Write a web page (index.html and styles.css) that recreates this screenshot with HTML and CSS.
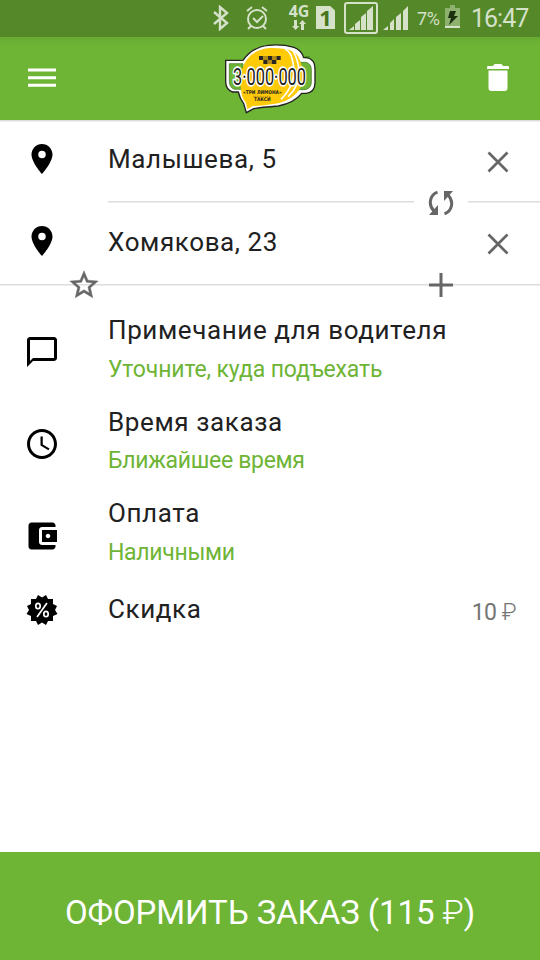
FILE: index.html
```html
<!DOCTYPE html>
<html lang="ru">
<head>
<meta charset="utf-8">
<title>Заказ такси</title>
<link rel="stylesheet" href="styles.css">
</head>
<body>
<div class="screen">
  <div class="status">
    <svg class="bt" width="18" height="26" viewBox="0 0 18 26"><path d="M2 7l13 11-7 6V2l7 6L2 19" fill="none" stroke="currentColor" stroke-width="2.4"/></svg>
    <svg class="alarm" width="24" height="26" viewBox="0 0 24 26"><g fill="none" stroke="currentColor" stroke-width="2"><circle cx="12" cy="14" r="9"/><path d="M8 13l4 4 6-6M2 6l5-4M22 6l-5-4M6 21l-3 3M18 21l3 3"/></g></svg>
    <div class="net"><span>4G</span><svg width="14" height="10" viewBox="0 0 14 10"><path d="M2 0h3v6h2.500L3.500 10 0 6h2zM9 10h3V4h2l-3.500-4L7 4h2z" fill="currentColor"/></svg></div>
    <div class="sim">1</div>
    <div class="sigbox"><svg width="26" height="26" viewBox="0 0 26 26"><path d="M1 25l5-4v4zM7 25v-6l5-4v10zM13 25V12l5-4v17zM19 25V6l6-5v24z" fill="currentColor"/></svg></div>
    <svg class="sig" width="26" height="26" viewBox="0 0 26 26"><path d="M0 25l5-4v4zM7 25v-7l4-4v11zM13 25V12l5-4v17zM20 25V6l5-5v24z" fill="currentColor"/></svg>
    <span class="pct">7%</span>
    <svg class="bat" width="15" height="24" viewBox="0 0 15 24"><path d="M0 3h5V0h5v3h5v18H0z" fill="#8eb16f"/><path d="M0 21h15v2H0z" fill="currentColor"/><path d="M5 6h6l-2 5h4L4 20l2-7H3z" fill="#1c3010"/></svg>
    <span class="time">16:47</span>
  </div>

  <header class="bar">
    <svg class="menu" width="28" height="20" viewBox="0 0 28 20"><path d="M0 2h28M0 9.7h28M0 17.3h28" stroke="#fff" stroke-width="3"/></svg>
    <svg class="logo" width="94" height="70" viewBox="21 18 282 210">
      <path d="M32 70H84Q112 30 160 25Q202 21 237 31Q259 39 266 62H276Q300 67 300 96V137Q300 165 273 169H260Q238 197 190 207Q135 211 116 215L94 227L86 200Q74 184 70 165H53Q33 159 32 135Z" fill="#fff" stroke="#222" stroke-width="4"/>
      <path d="M43 80H84V157H58Q43 152 43 133ZM252 76H273Q289 80 289 98V135Q289 154 271 158H247Z" fill="#6eb435" stroke="#397019" stroke-width="2"/>
      <path d="M95 68Q119 37 164 33Q207 32 228 41Q249 48 257 75Q274 123 253 158Q232 188 190 199Q143 207 114 207L97 217L93 197Q80 184 78 158Q72 99 95 68Z" fill="#ffca08"/>
      <path d="M210 36Q230 44 235 83Q245 140 198 187M235 43Q249 68 252 99Q252 151 219 179" fill="none" stroke="#fff" stroke-width="5"/>
      <path d="M132 57h13v12h-13zM158 57h13v12h-13zM184 57h13v12h-13zM145 69h13v12h-13zM171 69h13v12h-13z" fill="#292725"/>
      <path d="M145 57h13v12h-13zM171 57h13v12h-13zM158 69h13v12h-13z" fill="#af8b12"/>
      <text class="logo-num" x="54" y="143" textLength="219" lengthAdjust="spacingAndGlyphs">3·000·000</text>
      <text class="logo-sub" x="84" y="171" textLength="116" lengthAdjust="spacingAndGlyphs">«ТРИ ЛИМОНА»</text>
      <path d="M114 178h52" stroke="#a47f16" stroke-width="2" stroke-dasharray="4 2"/>
      <text class="logo-sub" x="117" y="192" textLength="50" lengthAdjust="spacingAndGlyphs">ТАКСИ</text>
      <text class="logo-tm" x="269" y="66">TM</text>
    </svg>
    <svg class="trash" width="22" height="28" viewBox="0 0 22 28"><path d="M1 2h5q1-2 2-2h6q1 0 2 2h5q1 0 1 1v2H0V3q0-1 1-1zM1.500 6.500h19V24q0 3-3 3h-13q-3 0-3-3z" fill="#fff"/></svg>
  </header>

  <main class="content">
    <section class="address">
      <svg class="pin" width="36" height="36" viewBox="0 0 24 24"><path d="M12 2C8.13 2 5 5.13 5 9c0 5.25 7 13 7 13s7-7.75 7-13c0-3.87-3.13-7-7-7zm0 9.5a2.5 2.5 0 0 1 0-5 2.5 2.5 0 0 1 0 5z"/></svg>
      <span class="title">Малышева, 5</span>
      <svg class="close" width="22" height="22" viewBox="0 0 22 22"><path d="M1.5 1.5l19 19M20.500 1.500l-19 19"/></svg>
      <div class="swap"><svg width="26" height="26" viewBox="0 0 26 26"><path d="M9.500 2.200C1.500 5 0 15 6 21M16.500 23.800C24.500 21 26 11 20 5" fill="none" stroke="#666" stroke-width="3"/><path d="M1 25h9v-10zM25 1h-9v10z" fill="#666"/></svg></div>
    </section>
    <section class="address second">
      <svg class="pin" width="36" height="36" viewBox="0 0 24 24"><path d="M12 2C8.130 2 5 5.130 5 9c0 5.250 7 13 7 13s7-7.750 7-13c0-3.870-3.130-7-7-7zm0 9.500a2.500 2.500 0 0 1 0-5 2.500 2.500 0 0 1 0 5z"/></svg>
      <span class="title">Хомякова, 23</span>
      <svg class="close" width="22" height="22" viewBox="0 0 22 22"><path d="M1.500 1.500l19 19M20.500 1.500l-19 19"/></svg>
      <svg class="star" width="34" height="34" viewBox="0 0 24 24"><path d="M22 9.240l-7.190-.62L12 2 9.190 8.630 2 9.240l5.460 4.730L5.820 21 12 17.270 18.180 21l-1.630-7.030L22 9.240zM12 15.400l-3.760 2.270 1-4.280-3.320-2.880 4.380-.38L12 6.100l1.710 4.040 4.380.38-3.320 2.880 1 4.280L12 15.400z" fill="#666"/></svg>
      <svg class="plus" width="24" height="24" viewBox="0 0 24 24"><path d="M12 0v24M0 12h24" stroke="#666" stroke-width="3"/></svg>
    </section>

    <section class="item">
      <svg class="icon" width="36" height="36" viewBox="0 0 24 24"><path d="M20 2H4c-1.100 0-2 .9-2 2v18l4-4h14c1.100 0 2-.9 2-2V4c0-1.100-.9-2-2-2zm0 14H6l-2 2V4h16v12z"/></svg>
      <div class="text"><span class="title">Примечание для водителя</span><span class="sub">Уточните, куда подъехать</span></div>
    </section>
    <section class="item">
      <svg class="icon" width="36" height="36" viewBox="0 0 24 24"><path d="M11.990 2C6.470 2 2 6.480 2 12s4.470 10 9.990 10C17.520 22 22 17.520 22 12S17.520 2 11.990 2zM12 20c-4.420 0-8-3.580-8-8s3.580-8 8-8 8 3.580 8 8-3.580 8-8 8zM12.500 7H11v6l5.250 3.150.75-1.230-4.500-2.670z"/></svg>
      <div class="text"><span class="title">Время заказа</span><span class="sub tight">Ближайшее время</span></div>
    </section>
    <section class="item">
      <svg class="icon wallet" width="36" height="36" viewBox="0 0 24 24"><path d="M21 18v1c0 1.100-.9 2-2 2H5c-1.110 0-2-.9-2-2V5c0-1.100.89-2 2-2h14c1.100 0 2 .9 2 2v1h-9c-1.110 0-2 .9-2 2v8c0 1.100.89 2 2 2h9zm-9-2h10V8H12v8zm4-2.500c-.83 0-1.500-.67-1.500-1.500s.67-1.500 1.500-1.500 1.500.67 1.500 1.500-.67 1.500-1.500 1.500z"/></svg>
      <div class="text"><span class="title">Оплата</span><span class="sub tight">Наличными</span></div>
    </section>
    <section class="item discount">
      <svg class="icon" width="36" height="36" viewBox="0 0 36 36"><path d="M18 5.500L22 3L24 7L29 7L29 12L33 14L31 18L33.500 22L29 24L29 29L24 29L22 33L18 30.500L14 33L12 29L7 29L7 24L2.500 22L5 18L3 14L7 12L7 7L12 7L14 3Z"/><g fill="none" stroke="#fff" stroke-width="1.700"><ellipse cx="14" cy="14" rx="2.200" ry="2.700"/><ellipse cx="22" cy="22" rx="2.200" ry="2.700"/><path d="M23 11L13 25"/></g></svg>
      <div class="text"><span class="title">Скидка</span></div>
      <span class="amount">10 <span class="rub">₽</span></span>
    </section>
  </main>

  <button class="order">ОФОРМИТЬ ЗАКАЗ (115 <span class="rub">₽</span>)</button>
</div>
</body>
</html>
```
FILE: styles.css
```css
* { box-sizing: border-box; }
body {
  margin: 0;
  background: #fff;
  font-family: Roboto, "Liberation Sans", sans-serif;
}
svg { display: block; flex: none; }
.screen {
  width: 540px;
  height: 960px;
  display: flex;
  flex-direction: column;
  overflow: hidden;
}
.status {
  height: 37px;
  flex: none;
  display: flex;
  align-items: flex-start;
  background: #548828;
  color: #d5e1c9;
  white-space: nowrap;
}
.bt { margin: 5px 0 0 212px; }
.alarm { margin: 5px 0 0 15px; }
.net {
  width: 22px;
  margin: 3px 0 0 19px;
  display: flex;
  flex-direction: column;
  align-items: center;
  font: 700 16px/16px "Noto Sans", sans-serif;
}
.net svg { margin-top: 1px; }
.sim {
  width: 19px;
  height: 23px;
  margin: 6px 0 0 6px;
  background: currentColor;
  clip-path: polygon(0 0, 75% 0, 100% 20%, 100% 100%, 0 100%);
  font: 700 22px/23px "Noto Sans", sans-serif;
  text-align: center;
}
.sim::first-letter { color: #447518; }
.sigbox {
  width: 34px;
  height: 32px;
  margin: 2px 0 0 9px;
  padding: 1px 2px;
  border: 2px solid currentColor;
  border-radius: 3px;
}
.sig { margin: 5px 0 0 5px; }
.pct { margin: 8px 0 0 8px; width: 24px; font-size: 18px; line-height: 22px; letter-spacing: -0.3px; }
.bat { margin: 5px 0 0 4px; }
.time { margin: 4px 0 0 11px; font-size: 25px; line-height: 30px; letter-spacing: -1px; }

.bar {
  height: 83px;
  flex: none;
  display: flex;
  align-items: center;
  justify-content: space-between;
  padding: 0 31px 0 28px;
  background: linear-gradient(#68aa32, #6eb435 8px);
}
.menu, .trash { margin-bottom: 1px; }
.logo { margin: 0 6px 2px 0; overflow: visible; }
.logo-num {
  font: 400 72px/1 Roboto, sans-serif;
  fill: #222;
  stroke: #fff;
  stroke-width: 10px;
  paint-order: stroke;
}
.logo-sub { font: 700 15px "DejaVu Sans", sans-serif; fill: #222; }
.logo-tm { font: 700 10px "Liberation Sans", sans-serif; fill: #397019; }

.content {
  flex: 1;
  background: linear-gradient(#dcdcdc 1px, #efefef 1px, #efefef 2px, #fff 2px);
  padding-top: 2px;
}
.address {
  position: relative;
  height: 80px;
  display: flex;
  align-items: flex-start;
  padding: 19px 31px 0 24px;
}
.address::after {
  content: "";
  position: absolute;
  left: 108px;
  right: 0;
  bottom: -1px;
  height: 2px;
  background: linear-gradient(#dedede 50%, #ececec 50%);
}
.second { height: 83px; padding-top: 21px; }
.second::after { left: 0; }
.address .title { margin: 3px 0 0 48px; }
.second .title { margin-top: 4px; }
.close { margin: 10px 0 0 auto; fill: none; stroke: #666; stroke-width: 2.7px; }
.swap {
  position: absolute;
  z-index: 1;
  left: 414px;
  bottom: -14px;
  padding: 0 14px;
  background: #fff;
}
.star { position: absolute; z-index: 1; left: 67px; bottom: -17px; stroke: #666; stroke-width: 0.3px; }
.plus { position: absolute; z-index: 1; left: 429px; bottom: -12px; }

.title {
  color: #212121;
  font-size: 26px;
  line-height: 30px;
  letter-spacing: 0.6px;
  white-space: nowrap;
}
.sub {
  margin-top: 11px;
  color: #6eb435;
  font-size: 23px;
  line-height: 27px;
  letter-spacing: -0.13px;
  white-space: nowrap;
}
.tight { letter-spacing: -0.3px; }
.item {
  height: 91.5px;
  display: flex;
  align-items: flex-start;
  padding: 0 24px;
}
.second + .item { margin-top: 16px; }
.icon { margin-top: 33px; }
.wallet { margin-top: 34px; }
.text {
  display: flex;
  flex-direction: column;
  margin: 14px 0 0 48px;
}
.item:nth-child(4) .sub { margin-top: 10px; }
.discount { height: 70px; }
.discount .icon { margin-top: 16px; }
.discount .text { margin-top: 18px; }
.amount {
  margin: 23px 0 0 auto;
  color: #757575;
  font-size: 23px;
  line-height: 27px;
  letter-spacing: -0.5px;
}
.rub { font-weight: 300; }
.order {
  height: 108px;
  flex: none;
  border: 0;
  padding: 14px 0 0;
  background: #6eb435;
  color: #fff;
  font: 400 33px/38px Roboto, sans-serif;
  letter-spacing: -0.08px;
}
```
